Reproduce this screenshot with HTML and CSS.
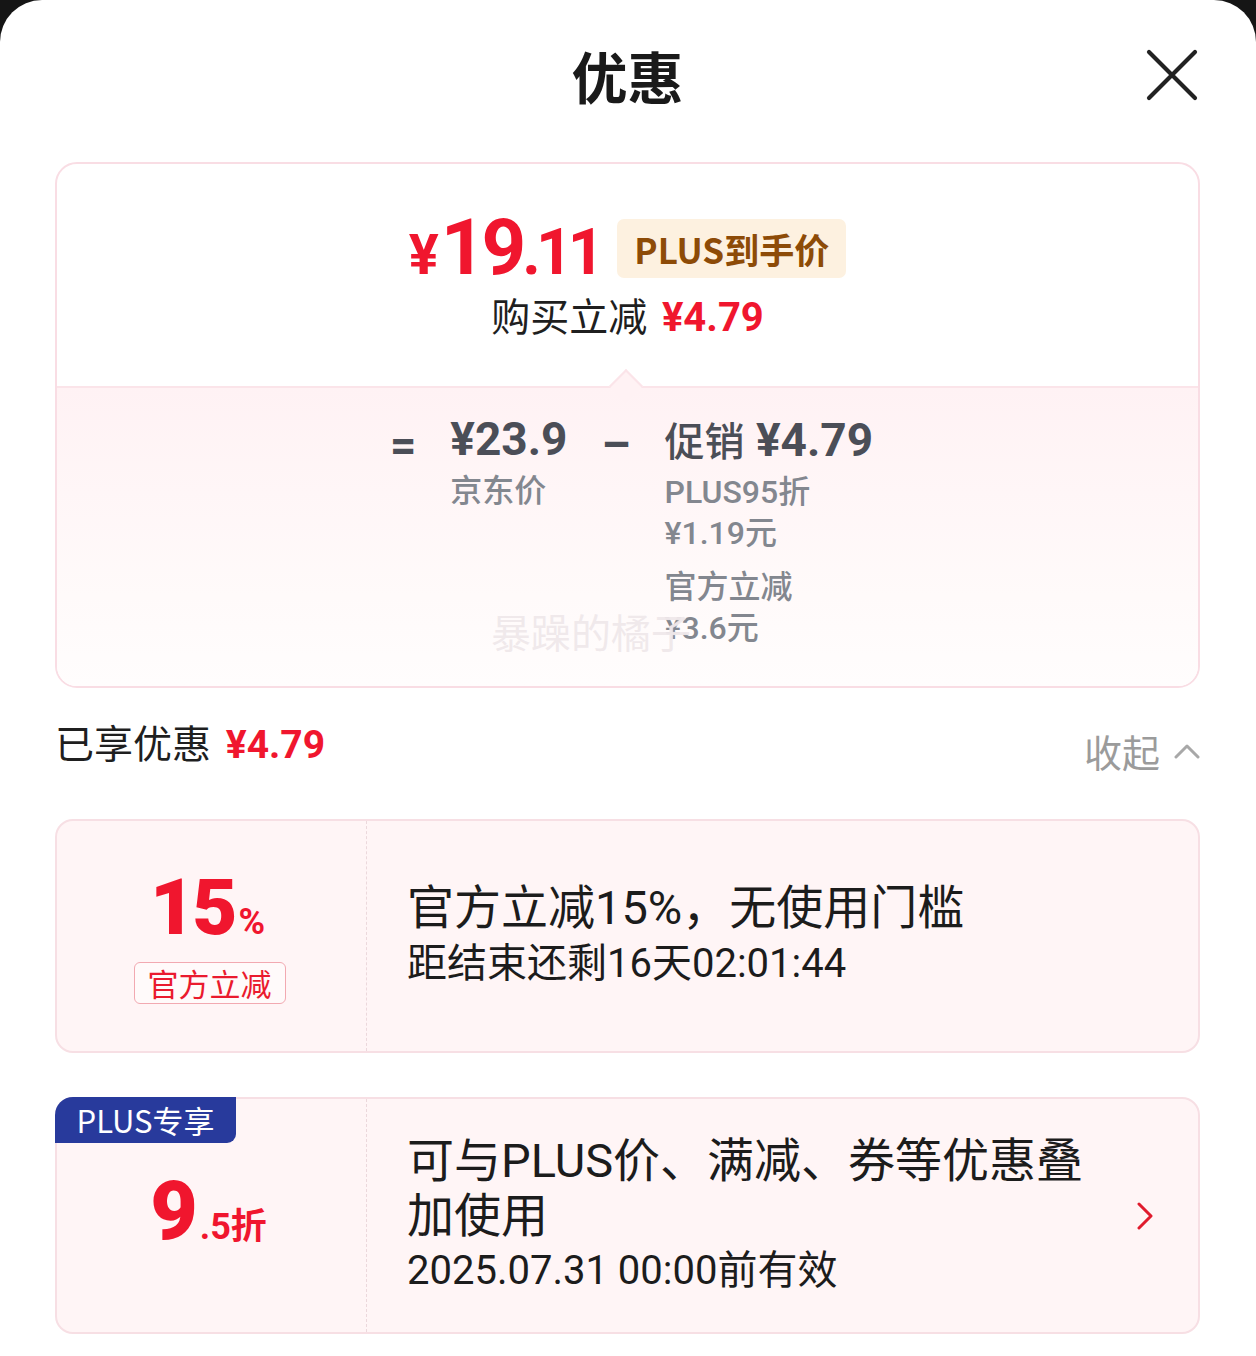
FILE: index.html
```html
<!DOCTYPE html>
<html lang="zh-CN">
<head>
<meta charset="utf-8">
<title>优惠</title>
<link rel="stylesheet" href="styles.css">
</head>
<body>
<div class="sheet">
  <header class="head">
    <span></span>
    <h1 class="title">优惠</h1>
    <button class="close" aria-label="关闭">
      <svg width="52" height="52" viewBox="0 0 52 52"><path d="M3 3 L49 49 M49 3 L3 49" stroke="#222" stroke-width="4.2" stroke-linecap="round" fill="none"/></svg>
    </button>
  </header>

  <section class="price-card">
    <div class="pc-top">
      <div class="final">
        <span class="cur">¥</span><span class="int">19</span><span class="dec">.11</span>
        <span class="badge">PLUS到手价</span>
      </div>
      <div class="save">购买立减 <span class="save-amt">¥4.79</span></div>
    </div>
    <div class="pc-bottom">
      <span class="notch"></span>
      <div class="formula">
        <span class="op">=</span>
        <div class="col">
          <div class="amt">¥23.9</div>
          <div class="lbl">京东价</div>
        </div>
        <span class="op">–</span>
        <div class="col">
          <div class="amt"><span class="amt-cn">促销</span> ¥4.79</div>
          <div class="lbl">PLUS95折</div>
          <div class="lbl">¥1.19元</div>
          <div class="lbl grp">官方立减</div>
          <div class="lbl">¥3.6元</div>
        </div>
      </div>
      <span class="wm" aria-hidden="true">暴躁的橘子</span>
    </div>
  </section>

  <div class="summary">
    <div class="sum-left">已享优惠 <span class="sum-amt">¥4.79</span></div>
    <div class="sum-right">收起
      <svg width="26" height="18" viewBox="0 0 26 18"><path d="M2 15 L13 4 L24 15" stroke="#a8a8a8" stroke-width="3" fill="none" stroke-linecap="round" stroke-linejoin="round"/></svg>
    </div>
  </div>

  <div class="coupon">
    <div class="cp-left">
      <div class="pct"><span class="pct-num">15</span><span class="pct-sym">%</span></div>
      <span class="tag">官方立减</span>
    </div>
    <div class="cp-right">
      <div class="cp-text">
        <div class="cp-title">官方立减15%，无使用门槛</div>
        <div class="cp-sub">距结束还剩16天02:01:44</div>
      </div>
    </div>
  </div>

  <div class="coupon coupon-plus">
    <span class="plus-badge">PLUS专享</span>
    <div class="cp-left">
      <div class="disc"><span class="disc-num">9</span><span class="disc-dec">.5折</span></div>
    </div>
    <div class="cp-right">
      <div class="cp-text">
        <div class="cp-title wrap">可与PLUS价、满减、券等优惠叠加使用</div>
        <div class="cp-sub">2025.07.31 00:00前有效</div>
      </div>
      <svg class="arrow" width="18" height="28" viewBox="0 0 18 28"><path d="M3 2 L15 14 L3 26" stroke="#e01b2d" stroke-width="3" fill="none" stroke-linecap="round" stroke-linejoin="round"/></svg>
    </div>
  </div>
</div>
</body>
</html>
```

FILE: styles.css
```css
* { box-sizing: border-box; }
html, body { margin: 0; padding: 0; }
body {
  background: #151515;
  font-family: Roboto, "Noto Sans CJK SC", sans-serif;
  color: #1c1c1c;
}
.sheet {
  background: #fff;
  min-height: 1356px;
  border-radius: 42px 42px 0 0;
  padding: 0 56px 30px 55px;
}
.head {
  height: 150px;
  display: grid;
  grid-template-columns: 1fr auto 1fr;
  align-items: center;
}
.title {
  margin: 0;
  font-family: "Noto Sans CJK SC", sans-serif;
  font-size: 56px;
  font-weight: 700;
  color: #1a1a1a;
  line-height: 1;
}
.close {
  justify-self: end;
  margin-right: 2px;
  background: none;
  border: 0;
  padding: 0;
  width: 52px;
  height: 52px;
  display: flex;
}

/* price card */
.price-card {
  margin-top: 12px;
  border: 2px solid #f9dde4;
  border-radius: 22px;
  overflow: hidden;
}
.pc-top {
  padding: 49px 0 43px;
  display: flex;
  flex-direction: column;
  align-items: center;
}
.final {
  display: flex;
  align-items: baseline;
  height: 70px;
  line-height: 70px;
  color: #f0162e;
  font-weight: 700;
}
.cur { font-size: 56px; margin-right: 2px; }
.int { font-size: 78px; letter-spacing: -4px; }
.dec { font-size: 64px; letter-spacing: -5px; margin-right: 18px; }
.badge {
  align-self: center;
  background: #fdf1e0;
  color: #8d4b07;
  font-family: "Noto Sans CJK SC", sans-serif;
  font-size: 35px;
  font-weight: 700;
  line-height: 59px;
  padding: 0 17px;
  border-radius: 7px;
}
.save {
  margin-top: 6px;
  font-size: 39px;
  line-height: 50px;
  color: #1f1f1f;
  font-family: "Noto Sans CJK SC", sans-serif;
}
.save-amt {
  font-family: Roboto, sans-serif;
  font-weight: 700;
  color: #f0162e;
  font-size: 40px;
  margin-left: 6px;
}
.pc-bottom {
  position: relative;
  border-top: 2px solid #fbe4e9;
  background: linear-gradient(#fff2f4, #fffafa 70%, #fffdfd);
  padding: 26px 0 37px;
}
.notch {
  position: absolute;
  left: 557px;
  top: -14px;
  width: 24px;
  height: 24px;
  transform: rotate(45deg);
  background: #fff2f4;
  border-left: 2px solid #fbe4e9;
  border-top: 2px solid #fbe4e9;
}
.formula {
  display: flex;
  justify-content: center;
  align-items: flex-start;
  gap: 34px;
  margin-left: 8px;
}
.op {
  font-size: 46px;
  font-weight: 700;
  line-height: 50px;
  color: #4b4e57;
  margin-top: 6px;
}
.col { display: flex; flex-direction: column; }
.amt {
  font-size: 46px;
  font-weight: 700;
  line-height: 50px;
  color: #4b4e57;
  margin-bottom: 7px;
}
.amt-cn {
  font-family: "Noto Sans CJK SC", sans-serif;
  font-weight: 500;
  font-size: 40px;
}
.lbl {
  font-size: 32px;
  font-weight: 500;
  line-height: 41px;
  color: #83878f;
}
.lbl.grp { margin-top: 13px; }
.wm {
  position: absolute;
  left: 434px;
  top: 221px;
  font-family: "Noto Sans CJK SC", sans-serif;
  font-size: 40px;
  line-height: 44px;
  color: rgba(235, 226, 229, 0.75);
  text-shadow: 0 0 1px rgba(255,255,255,0.9);
  pointer-events: none;
}

/* summary */
.summary {
  display: flex;
  justify-content: space-between;
  align-items: flex-start;
  margin-top: 28px;
}
.sum-left {
  font-family: "Noto Sans CJK SC", sans-serif;
  font-size: 39px;
  line-height: 50px;
  color: #1f1f1f;
}
.sum-amt {
  font-family: Roboto, sans-serif;
  font-weight: 700;
  color: #f0162e;
  font-size: 39px;
  margin-left: 6px;
}
.sum-right {
  margin-top: 10px;
  display: flex;
  align-items: center;
  gap: 14px;
  font-family: "Noto Sans CJK SC", sans-serif;
  font-size: 38px;
  line-height: 50px;
  color: #9b9b9b;
}

/* coupons */
.coupon {
  position: relative;
  margin-top: 43px;
  display: flex;
  height: 234px;
  background: #fff5f6;
  border: 2px solid #f7dfe4;
  border-radius: 18px;
}
.coupon-plus { margin-top: 44px; height: 237px; }
.cp-left {
  width: 310px;
  flex: none;
  border-right: 1px dashed #ecd8dc;
  display: flex;
  flex-direction: column;
  align-items: center;
  justify-content: center;
  padding-top: 4px;
}
.pct { color: #f0162e; font-weight: 700; line-height: 72px; display: flex; align-items: baseline; margin-left: -8px; }
.pct-num { font-size: 78px; letter-spacing: -3px; font-weight: 900; }
.pct-sym { font-size: 36px; margin-left: 4px; }
.tag {
  margin-top: 4px;
  font-family: "Noto Sans CJK SC", sans-serif;
  font-size: 31px;
  line-height: 40px;
  color: #ea1a2e;
  border: 1px solid #f2a9b1;
  background: #fffafa;
  border-radius: 6px;
  padding: 0 13px;
  margin-left: -4px;
}
.disc { color: #f0162e; font-weight: 700; display: flex; align-items: baseline; line-height: 80px; margin-top: 2px; margin-left: -6px; }
.disc-num { font-size: 82px; font-weight: 900; }
.disc-dec { font-size: 36px; margin-left: 2px; }
.cp-right {
  flex: 1;
  display: flex;
  align-items: center;
  padding-left: 40px;
  padding-right: 44px;
}
.cp-text { flex: 1; }
.cp-title {
  font-size: 47px;
  line-height: 56px;
  color: #1c1c1c;
}
.cp-title.wrap { max-width: 700px; line-height: 55px; }
.cp-sub {
  font-size: 40px;
  line-height: 56px;
  color: #1c1c1c;
}
.coupon-plus .cp-sub { line-height: 55px; }
.arrow { flex: none; }
.plus-badge {
  position: absolute;
  left: -2px;
  top: -2px;
  width: 181px;
  height: 46px;
  background: #283a9c;
  color: #fff;
  font-family: "Noto Sans CJK SC", sans-serif;
  font-size: 31px;
  line-height: 46px;
  text-align: center;
  border-radius: 18px 0 9px 0;
}
```
